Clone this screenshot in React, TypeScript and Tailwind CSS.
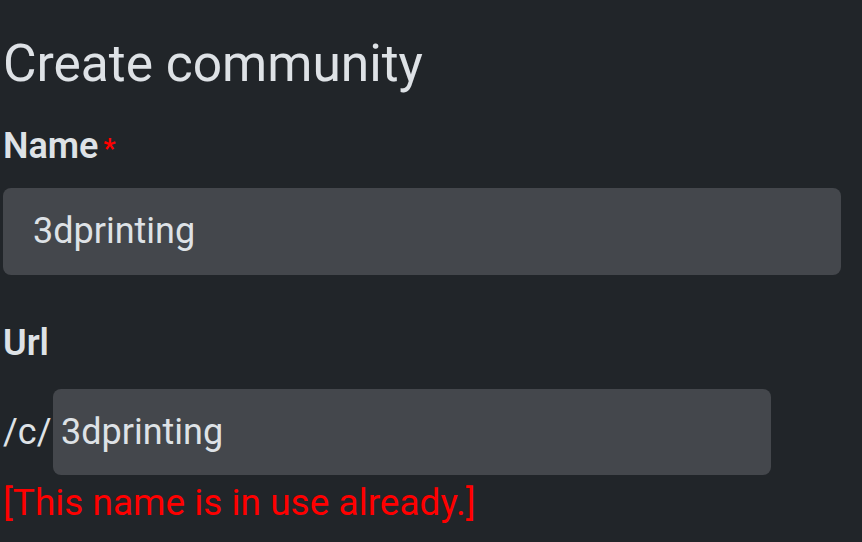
export default function App() {
  return (
    <div className="min-h-[542px] w-full bg-[#212529] pl-[3px] pr-[21px] pt-[33px] font-['Roboto',sans-serif] text-[#dee2e6]">
      <h1 className="text-[51.5px] font-normal leading-[1.2]">Create community</h1>

      <form className="mt-[24px]">
        <label className="block text-[36px] font-semibold leading-[1.5]">
          Name<span className="ml-[5px] text-[27px] text-[#ff0000]">*</span>
        </label>
        <input
          className="mt-[15px] h-[87px] w-full rounded-lg bg-[#44474c] px-[30px] text-[36px] leading-[1.5] text-[#dee2e6] outline-none"
          defaultValue="3dprinting"
        />

        <label className="mt-[41px] block text-[36px] font-semibold leading-[1.5]">Url</label>
        <div className="mt-[19px] flex w-[768px] items-center text-[36px] leading-[1.5]">
          <span className="w-[50px] shrink-0">/c/</span>
          <input
            className="h-[86px] flex-1 rounded-lg bg-[#44474c] px-2 text-[36px] text-[#dee2e6] outline-none"
            defaultValue="3dprinting"
          />
        </div>
        <div className="mt-px text-[37px] leading-[1.45] text-[#ff0000]">[This name is in use already.]</div>
      </form>
    </div>
  );
}
